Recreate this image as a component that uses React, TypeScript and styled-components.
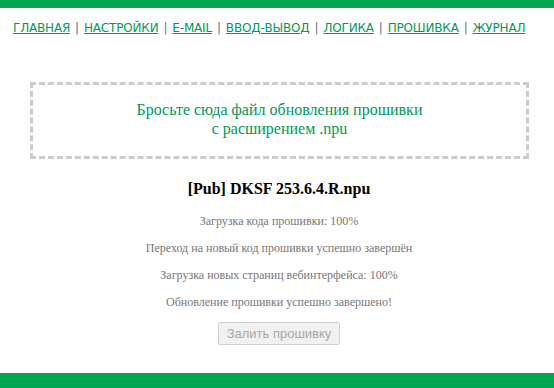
import * as React from "react";
import styled, { createGlobalStyle } from "styled-components";

const Global = createGlobalStyle`
  html, body {
    margin: 0;
    padding: 0;
    background: #fff;
  }
  body {
    font-family: "Liberation Serif", "Times New Roman", serif;
  }
`;

const Page = styled.div`
  display: flex;
  flex-direction: column;
  min-height: 388px;
  border-top: 8px solid #00a651;
  box-sizing: border-box;
`;

const Nav = styled.nav`
  padding: 12px 0 0 13px;
  font-family: "DejaVu Sans", Verdana, sans-serif;
  font-size: 12px;
  letter-spacing: -0.18px;
  line-height: 16px;
  color: #666;
  white-space: nowrap;
`;

const NavLink = styled.a`
  color: #00995a;
  text-decoration: underline;
`;

const Sep = styled.span`
  color: #6b6b8b;
  margin: 0 5px;
`;

const Main = styled.main`
  flex: 1;
  padding: 0 9px 0 13px;
  display: flex;
  flex-direction: column;
  align-items: center;
`;

const DropZone = styled.div`
  align-self: stretch;
  margin: 46px 16px 0 17px;
  height: 67px;
  padding-bottom: 4px;
  border: 3px dashed #cccccc;
  display: flex;
  align-items: center;
  justify-content: center;
  text-align: center;
  color: #00995a;
  font-size: 16px;
  line-height: 19px;
`;

const FileName = styled.h2`
  margin: 20px 0 0;
  font-size: 16px;
  font-weight: bold;
  color: #000;
  line-height: 20px;
`;

const Status = styled.p<{ $first?: boolean }>`
  margin: 0;
  margin-top: ${(p) => (p.$first ? "15px" : "13px")};
  font-size: 12px;
  line-height: 14px;
  color: #777;
`;

const UploadButton = styled.button`
  margin-top: 13px;
  padding: 3px 8px 2px;
  font-family: "Liberation Sans", Arial, sans-serif;
  font-size: 13px;
  line-height: 16px;
  color: #a8a8a8;
  background: #f1f1f1;
  border: 1px solid #cfcfcf;
  border-radius: 2px;
`;

const Footer = styled.footer`
  height: 15px;
  background: #00a651;
  margin-top: 20px;
`;

const links = [
  "ГЛАВНАЯ",
  "НАСТРОЙКИ",
  "E-MAIL",
  "ВВОД-ВЫВОД",
  "ЛОГИКА",
  "ПРОШИВКА",
  "ЖУРНАЛ",
];

const statuses = [
  "Загрузка кода прошивки: 100%",
  "Переход на новый код прошивки успешно завершён",
  "Загрузка новых страниц вебинтерфейса: 100%",
  "Обновление прошивки успешно завершено!",
];

export default function App() {
  return (
    <Page>
      <Global />
      <Nav>
        {links.map((l, i) => (
          <React.Fragment key={l}>
            {i > 0 && <Sep>|</Sep>}
            <NavLink href="#">{l}</NavLink>
          </React.Fragment>
        ))}
      </Nav>
      <Main>
        <DropZone>
          Бросьте сюда файл обновления прошивки
          <br />
          с расширением .npu
        </DropZone>
        <FileName>[Pub] DKSF 253.6.4.R.npu</FileName>
        {statuses.map((s, i) => (
          <Status key={s} $first={i === 0}>
            {s}
          </Status>
        ))}
        <UploadButton disabled>Залить прошивку</UploadButton>
      </Main>
      <Footer />
    </Page>
  );
}
